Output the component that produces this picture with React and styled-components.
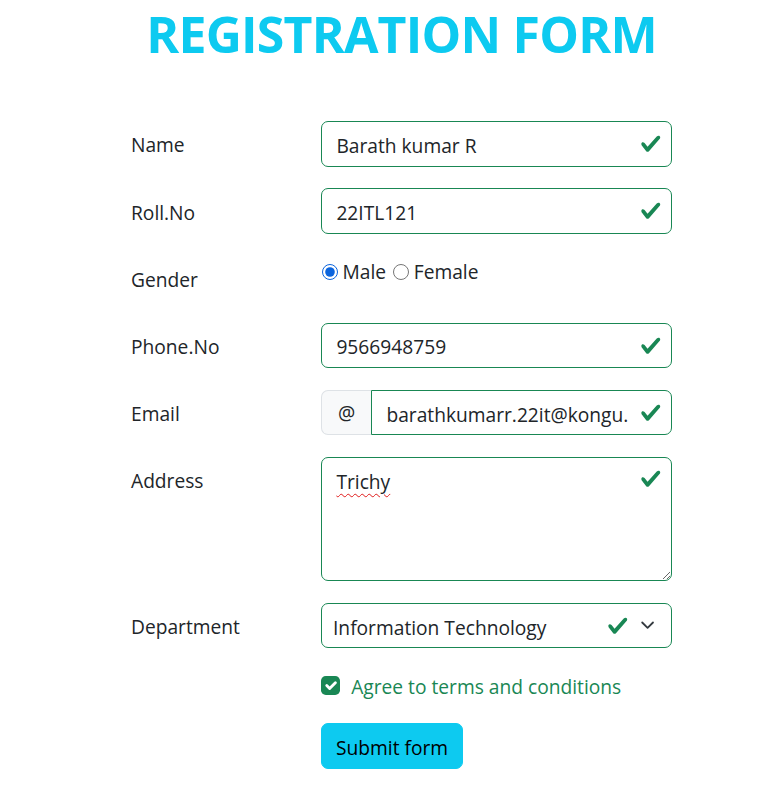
import React from 'react';
import styled, { createGlobalStyle } from 'styled-components';

const GlobalStyle = createGlobalStyle`
  body {
    margin: 0;
    background: #fff;
    font-family: "Open Sans", "Noto Sans", sans-serif;
    color: #212529;
  }
`;

const VALID = '#198754';

const Title = styled.h1`
  margin: 0;
  padding-left: 26px;
  text-align: center;
  color: #0dcaf0;
  font-size: 50px;
  font-weight: 700;
  letter-spacing: -0.8px;
  line-height: 68px;
`;

const Form = styled.form`
  display: grid;
  grid-template-columns: 190px 351px;
  row-gap: 21.6px;
  padding: 53px 0 20px 131px;
  font-size: 19.2px;
  line-height: 28.8px;
`;

const Label = styled.label`
  padding: 10.4px 0 6.4px;
  font-size: 19.2px;
  line-height: 28.8px;
`;

const Field = styled.div`
  position: relative;
  display: flex;
  grid-column: 2;
`;

const TextInput = styled.input`
  box-sizing: border-box;
  width: 100%;
  height: 45.6px;
  padding: 8.8px 43px 5.6px 14.4px;
  font: inherit;
  color: #212529;
  border: 1px solid ${VALID};
  border-radius: ${(p) => (p.$joined ? '0 7px 7px 0' : '7px')};
  outline: none;
  background: #fff;
`;

const ValidIcon = styled.svg`
  position: absolute;
  width: 21.6px;
  height: 21.6px;
  right: ${(p) => p.$right || 10.8}px;
  top: ${(p) => (p.$top ? p.$top + 'px' : '12px')};
  pointer-events: none;
`;

const Addon = styled.span`
  box-sizing: border-box;
  flex: 0 0 50px;
  height: 45.6px;
  padding-top: 2px;
  display: flex;
  align-items: center;
  justify-content: center;
  background: #f8f9fa;
  border: 1px solid #dee2e6;
  border-right: none;
  border-radius: 7px 0 0 7px;
  color: #212529;
`;

const RadioGroup = styled.div`
  grid-column: 2;
  display: flex;
  align-items: center;
  height: 28.8px;
  margin-top: 2.4px;
`;

const RadioLabel = styled.label`
  display: inline-flex;
  align-items: center;
  margin-right: 6px;
`;

const Radio = styled.input`
  width: 15.6px;
  height: 15.6px;
  margin: 0 5px 0 1px;
  accent-color: #0b64dd;
`;

const TextArea = styled.textarea`
  box-sizing: border-box;
  width: 100%;
  height: 124px;
  padding: 10px 43px 7.2px 14.4px;
  font: inherit;
  color: #212529;
  border: 1px solid ${VALID};
  border-radius: 7px;
  outline: none;
  resize: vertical;
  text-decoration: underline wavy #e01b1b;
  text-decoration-thickness: 1px;
  text-underline-offset: 4px;
`;

const Select = styled.select`
  box-sizing: border-box;
  width: 100%;
  height: 45.6px;
  padding: 9.8px 79px 4.6px 11px;
  font: inherit;
  color: #212529;
  border: 1px solid ${VALID};
  border-radius: 7px;
  outline: none;
  background: #fff;
  appearance: none;
`;

const Chevron = styled.svg`
  position: absolute;
  right: 14.4px;
  top: 15.6px;
  width: 19.2px;
  height: 14.4px;
  pointer-events: none;
`;

const CheckRow = styled.label`
  grid-column: 2;
  display: flex;
  align-items: flex-start;
  padding-top: 1px;
  color: ${VALID};
  cursor: pointer;
`;

const CheckBox = styled.span`
  flex: 0 0 19.2px;
  height: 19.2px;
  margin: 4.8px 11px 0 0;
  border-radius: 4.8px;
  background: ${VALID};
  display: flex;
  align-items: center;
  justify-content: center;
`;

const CheckText = styled.span`
  padding-top: 2px;
`;

const SubmitButton = styled.button`
  grid-column: 2;
  justify-self: start;
  height: 45.6px;
  padding: 10px 14px 4.4px;
  font: inherit;
  color: #000;
  background: #0dcaf0;
  border: 1px solid #0dcaf0;
  border-radius: 7px;
  cursor: pointer;
`;

const Check = (props) => (
  <ValidIcon viewBox="0 0 8 8" {...props}>
    <path
      fill={VALID}
      d="M2.3 6.73.6 4.53c-.4-1.04.46-1.4 1.1-.8l1.1 1.4 3.4-3.8c.6-.63 1.6-.27 1.2.7l-4 4.6c-.43.5-.8.4-1.1.1z"
    />
  </ValidIcon>
);

export default function App() {
  return (
    <>
      <GlobalStyle />
      <Title>REGISTRATION FORM</Title>
      <Form onSubmit={(e) => e.preventDefault()}>
        <Label htmlFor="name">Name</Label>
        <Field>
          <TextInput id="name" defaultValue="Barath kumar R" />
          <Check />
        </Field>

        <Label htmlFor="roll">Roll.No</Label>
        <Field>
          <TextInput id="roll" defaultValue="22ITL121" />
          <Check />
        </Field>

        <Label>Gender</Label>
        <RadioGroup>
          <RadioLabel>
            <Radio type="radio" name="gender" defaultChecked />
            Male
          </RadioLabel>
          <RadioLabel>
            <Radio type="radio" name="gender" />
            Female
          </RadioLabel>
        </RadioGroup>

        <Label htmlFor="phone">Phone.No</Label>
        <Field>
          <TextInput id="phone" defaultValue="9566948759" />
          <Check />
        </Field>

        <Label htmlFor="email">Email</Label>
        <Field>
          <Addon>@</Addon>
          <TextInput id="email" $joined defaultValue="barathkumarr.22it@kongu.edu" />
          <Check />
        </Field>

        <Label htmlFor="address">Address</Label>
        <Field>
          <TextArea id="address" defaultValue="Trichy" spellCheck={false} />
          <Check $top={10.8} />
        </Field>

        <Label htmlFor="dept">Department</Label>
        <Field>
          <Select id="dept" defaultValue="it">
            <option value="it">Information Technology</option>
            <option value="cse">Computer Science</option>
          </Select>
          <Check $right={43.2} />
          <Chevron viewBox="0 0 16 16">
            <path
              fill="none"
              stroke="#343a40"
              strokeLinecap="round"
              strokeLinejoin="round"
              strokeWidth="2"
              d="m2 5 6 6 6-6"
            />
          </Chevron>
        </Field>

        <CheckRow>
          <CheckBox>
            <svg viewBox="0 0 20 20" width="19.2" height="19.2">
              <path
                fill="none"
                stroke="#fff"
                strokeLinecap="round"
                strokeLinejoin="round"
                strokeWidth="3"
                d="m6 10 3 3 6-6"
              />
            </svg>
          </CheckBox>
          <CheckText>Agree to terms and conditions</CheckText>
        </CheckRow>

        <SubmitButton type="submit">Submit form</SubmitButton>
      </Form>
    </>
  );
}
